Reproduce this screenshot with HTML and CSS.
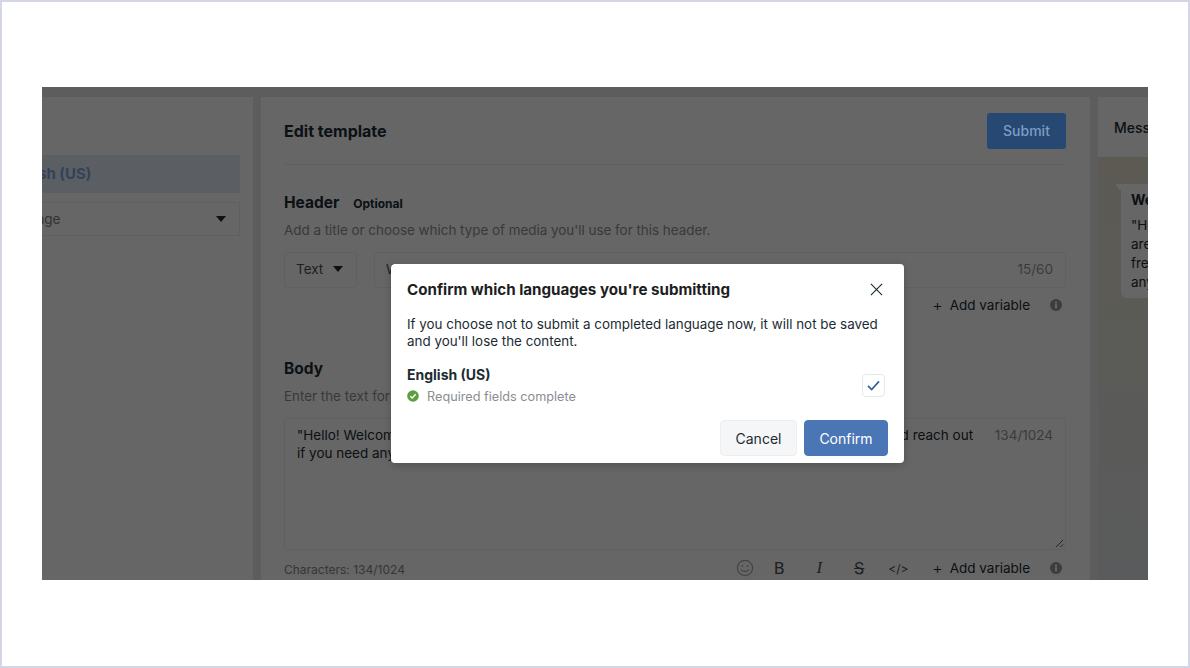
FILE: index.html
```html
<!DOCTYPE html>
<html lang="en">
<head>
<meta charset="utf-8">
<title>Edit template</title>
<link rel="stylesheet" href="styles.css">
</head>
<body>
<div class="frame">
  <div class="screen">
    <div class="columns">
      <aside class="side">
        <div class="lang-active">English (US)</div>
        <div class="lang-select"><span>Add language</span><i class="caret"></i></div>
      </aside>
      <main class="editor">
        <div class="editor-head">
          <h1>Edit template</h1>
          <button class="submit">Submit</button>
        </div>
        <div class="section-head header-head"><h2>Header</h2><span class="optional">Optional</span></div>
        <p class="hint">Add a title or choose which type of media you'll use for this header.</p>
        <div class="input-row">
          <div class="type-select"><span>Text</span><i class="caret"></i></div>
          <div class="text-input"><span>Welcome message</span><span class="count">15/60</span></div>
        </div>
        <div class="tools tools-header">
          <span class="plus">+</span><span class="add">Add variable</span>
          <svg class="info" viewBox="0 0 12 12"><circle cx="6" cy="6" r="6" fill="#9a9a9a"/><rect x="5" y="5.2" width="2" height="4" fill="#fff"/><rect x="5" y="2.6" width="2" height="1.8" fill="#fff"/></svg>
        </div>
        <div class="section-head body-head"><h2>Body</h2></div>
        <p class="hint">Enter the text for your message in the language you've selected.</p>
        <div class="textarea">
          <p class="ta-text">"Hello! Welcome to our service. We are so glad to have you here. Please feel free to explore and reach out if you need any assistance"</p>
          <span class="count">134/1024</span>
          <svg class="grip" viewBox="0 0 10 10"><path d="M1 9 9 1M6 9 9 6" stroke="#444" stroke-width="1" fill="none"/></svg>
        </div>
        <div class="foot">
          <span class="chars">Characters: 134/1024</span>
          <div class="tools">
            <svg class="emoji" viewBox="0 0 18 18" fill="none" stroke="#a3a5a7" stroke-width="1.2"><circle cx="9" cy="9" r="7.6"/><path d="M5 10.4c1 2.6 7 2.6 8 0"/><path d="M6.4 6.2v1.6M11.6 6.2v1.6" stroke-width="1.6"/></svg>
            <span class="fmt fmt-b">B</span>
            <span class="fmt fmt-i">I</span>
            <span class="fmt fmt-s">S</span>
            <span class="fmt fmt-c">&lt;/&gt;</span>
            <span class="plus">+</span><span class="add">Add variable</span>
            <svg class="info" viewBox="0 0 12 12"><circle cx="6" cy="6" r="6" fill="#9a9a9a"/><rect x="5" y="5.2" width="2" height="4" fill="#fff"/><rect x="5" y="2.6" width="2" height="1.8" fill="#fff"/></svg>
          </div>
        </div>
      </main>
      <section class="preview">
        <div class="preview-head">Message preview</div>
        <div class="wall">
          <div class="bubble">
            <strong>Welcome message</strong>
            <p>"Hello! Welcome</p>
            <p>are glad to have</p>
            <p>free to explore</p>
            <p>any help."</p>
          </div>
        </div>
      </section>
    </div>
    <div class="scrim"></div>
    <div class="modal">
      <div class="modal-head">
        <h3>Confirm which languages you're submitting</h3>
        <svg class="close" viewBox="0 0 14 14"><path d="M1 1 13 13M13 1 1 13" stroke="#1c2b33" stroke-width="1.2" fill="none"/></svg>
      </div>
      <p class="modal-text">If you choose not to submit a completed language now, it will not be saved and you'll lose the content.</p>
      <div class="lang-row">
        <div>
          <div class="lang-name">English (US)</div>
          <div class="status">
            <svg class="ok" viewBox="0 0 12 12"><circle cx="6" cy="6" r="5.8" fill="#5c9e3f"/><path d="M3.3 6.2 5.2 8 8.7 4.3" stroke="#fff" stroke-width="1.5" fill="none"/></svg>
            <span>Required fields complete</span>
          </div>
        </div>
        <div class="checkbox"><svg viewBox="0 0 14 12"><path d="M1 6.5 5 10.5 13 1.5" stroke="#2f5f9e" stroke-width="1.8" fill="none"/></svg></div>
      </div>
      <div class="actions">
        <button class="cancel">Cancel</button>
        <button class="confirm">Confirm</button>
      </div>
    </div>
  </div>
</div>
</body>
</html>
```

FILE: styles.css
```css
* { box-sizing: border-box; }
html, body { margin: 0; padding: 0; }
body { width: 1190px; height: 668px; overflow: hidden; background: #fff; font-family: Inter, "Liberation Sans", sans-serif; color: #1c2b33; }
h1, h2, h3, p { margin: 0; }
button { font-family: inherit; }

.frame { width: 1190px; height: 668px; border: 2px solid #d3d6e6; padding: 85px 40px 0; background: #fff; }
.screen { position: relative; width: 1106px; height: 493px; overflow: hidden; background: #e8e9ea; }
.columns { display: flex; gap: 8px; height: 100%; padding-top: 10px; }

.side { width: 211px; flex: none; background: #fff; padding: 58px 13px 0 0; overflow: hidden; }
.lang-active { height: 38px; margin-left: -60px; padding-left: 20px; background: #e4eef8; color: #7fa6d8; font-size: 15px; font-weight: 700; line-height: 38px; white-space: nowrap; }
.lang-select { height: 34px; margin: 9px 0 0 -92px; padding: 0 13px 0 22px; display: flex; justify-content: space-between; align-items: center; border: 1px solid #f0f1f2; border-left: 0; color: #7a7d81; font-size: 13.5px; }
.caret { display: block; width: 0; height: 0; border: 5px solid transparent; border-top: 6px solid #1c2b33; border-bottom: 0; }

.editor { width: 829px; flex: none; background: #fff; padding: 0 24px 0 23px; }
.editor-head { height: 68px; display: flex; justify-content: space-between; align-items: center; border-bottom: 1px solid #f0f1f2; }
.editor-head h1 { padding-top: 1px; font-size: 16px; font-weight: 700; }
.submit { position: relative; z-index: 1; width: 79px; height: 36px; border: 0; border-radius: 3px; background: #264873; color: #7f9cc4; font-size: 14px; font-weight: 500; }
.section-head { display: flex; align-items: baseline; gap: 14px; }
.section-head h2 { padding-top: 1px; font-size: 15.5px; font-weight: 700; line-height: 20px; }
.header-head { margin-top: 27px; }
.optional { font-size: 12px; font-weight: 700; }
.hint { margin-top: 8px; font-size: 13.4px; line-height: 18px; color: #8d9094; white-space: nowrap; }

.input-row { display: flex; gap: 17px; margin-top: 13px; height: 36px; }
.type-select { width: 73px; display: flex; align-items: center; gap: 10px; padding: 0 0 2px 11px; border: 1px solid #eff0f1; border-radius: 3px; font-size: 13.5px; color: #4a5258; }
.text-input { flex: 1; display: flex; align-items: center; justify-content: space-between; padding: 0 12px 2px 11px; border: 1px solid #eff0f1; border-radius: 3px; font-size: 13.5px; color: #4a5258; }
.count { color: #93969a; font-size: 13.5px; }

.tools { display: flex; align-items: center; font-size: 13.5px; }
.tools-header { justify-content: flex-end; height: 34px; margin-bottom: 36px; }
.plus { font-size: 16px; margin-right: 7px; font-weight: 300; }
.add { margin-right: 20px; }
.info { width: 12px; height: 12px; margin-right: 4px; }

.textarea { position: relative; height: 132px; margin-top: 13px; padding: 7px 12px; display: flex; justify-content: space-between; border: 1px solid #eff0f1; border-radius: 3px; }
.ta-text { width: 684px; font-size: 13.5px; line-height: 18px; }
.textarea .count { line-height: 18px; }
.grip { position: absolute; right: 1px; bottom: 1px; width: 9px; height: 9px; }

.foot { display: flex; justify-content: space-between; align-items: center; height: 36px; }
.chars { font-size: 12px; color: #85888c; margin-top: 2px; }
.emoji { width: 18px; height: 18px; margin-right: 19px; }
.fmt { display: block; text-align: center; color: #4a5258; }
.fmt-b { width: 12px; margin-right: 28px; font-size: 16px; font-family: "DejaVu Sans", sans-serif; }
.fmt-i { width: 12px; margin-right: 28px; font-size: 17px; font-style: italic; font-family: "Liberation Serif", serif; }
.fmt-s { width: 12px; margin-right: 23px; font-size: 16px; text-decoration: line-through; }
.fmt-c { width: 18px; margin-right: 26px; font-size: 12px; }

.preview { width: 58px; flex: none; display: flex; flex-direction: column; }
.preview-head { height: 60px; padding: 22px 0 0 16px; background: #fff; font-size: 14px; font-weight: 500; white-space: nowrap; overflow: hidden; }
.wall { flex: 1; padding: 27px 0 0 23px; background: linear-gradient(#e8e2d2, #e2e4dc 60%, #dfe4e6); overflow: hidden; }
.bubble { position: relative; width: 140px; height: 114px; padding: 6px 10px; background: #fff; border-radius: 0 6px 6px 6px; font-size: 13.5px; line-height: 19px; white-space: nowrap; }
.bubble::before { content: ""; position: absolute; left: -5px; top: 0; border: 3px solid transparent; border-top: 6px solid #fff; border-right: 3px solid #fff; border-bottom: 0; }
.bubble strong { display: block; margin-bottom: 7px; font-size: 14px; font-weight: 700; }

.scrim { position: absolute; inset: 0; background: rgba(0, 0, 0, .6); }

.modal { position: absolute; z-index: 2; left: 349px; top: 177px; width: 513px; height: 199px; padding: 16px 16px 7px; background: #fff; border-radius: 4px; box-shadow: 0 2px 8px rgba(0, 0, 0, .2); }
.modal-head { display: flex; justify-content: space-between; align-items: center; height: 18px; }
.modal-head h3 { font-size: 15.15px; font-weight: 700; color: #1c1e21; white-space: nowrap; }
.close { width: 13px; height: 13px; margin-right: 5px; }
.modal-text { margin-top: 18px; font-size: 13.4px; line-height: 17px; color: #1c2b33; }
.lang-row { display: flex; justify-content: space-between; align-items: center; margin-top: 16px; }
.lang-name { font-size: 14px; font-weight: 700; line-height: 18px; }
.status { display: flex; align-items: center; gap: 8px; margin-top: 5px; font-size: 12.7px; line-height: 16px; color: #8a8d91; }
.ok { width: 12px; height: 12px; margin-top: -3px; }
.checkbox { width: 23px; height: 23px; margin-right: 3px; display: flex; align-items: center; justify-content: center; border: 1px solid #e6e8eb; border-radius: 4px; }
.checkbox svg { width: 13px; height: 11px; }
.actions { display: flex; justify-content: flex-end; gap: 7px; margin-top: 15px; }
.actions button { height: 36px; border-radius: 4px; font-size: 14px; font-weight: 400; }
.cancel { width: 77px; background: #f5f6f7; border: 1px solid #eceef0; color: #1c2b33; }
.confirm { width: 84px; background: #4a76b5; border: 1px solid #4a76b5; color: #fff; }
```
